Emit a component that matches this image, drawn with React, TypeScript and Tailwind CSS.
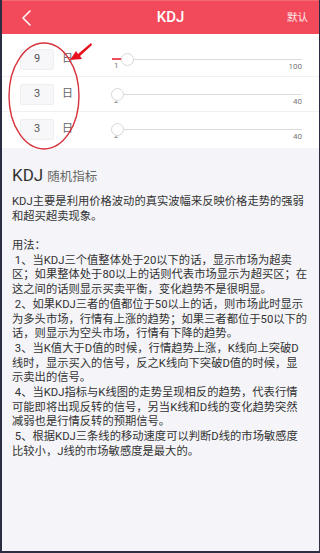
const font = { fontFamily: 'Roboto, "Noto Sans CJK SC", sans-serif' }

const rows = [
  { value: 9, min: 1, max: 100 },
  { value: 3, min: 2, max: 40 },
  { value: 3, min: 2, max: 40 },
]

const lines = [
  'KDJ主要是利用价格波动的真实波幅来反映价格走势的强弱',
  '和超买超卖现象。',
  '',
  '用法：',
  '\u00a01、当KDJ三个值整体处于20以下的话，显示市场为超卖',
  '区；如果整体处于80以上的话则代表市场显示为超买区；在',
  '这之间的话则显示买卖平衡，变化趋势不是很明显。',
  '\u00a02、如果KDJ三者的值都位于50以上的话，则市场此时显示',
  '为多头市场，行情有上涨的趋势；如果三者都位于50以下的',
  '话，则显示为空头市场，行情有下降的趋势。',
  '\u00a03、当K值大于D值的时候，行情趋势上涨，K线向上突破D',
  '线时，显示买入的信号，反之K线向下突破D值的时候，显',
  '示卖出的信号。',
  '\u00a04、当KDJ指标与K线图的走势呈现相反的趋势，代表行情',
  '可能即将出现反转的信号，另当K线和D线的变化趋势突然',
  '减弱也是行情反转的预期信号。',
  '\u00a05、根据KDJ三条线的移动速度可以判断D线的市场敏感度',
  '比较小，J线的市场敏感度是最大的。',
]

export default function App() {
  return (
    <div className="w-[320px] h-[553px] bg-[#2b2d42] overflow-hidden" style={font}>
      <div className="ml-[2px] mr-[1px] h-[551px] flex flex-col bg-[#f5f5f9]">
        {/* Header */}
        <header className="h-[34px] bg-[#f24a5a] border-t border-[#f46875] flex items-center justify-between">
          <svg className="ml-[18px]" width="12" height="18" viewBox="0 0 12 18">
            <path d="M10 2 L3 9 L10 16" fill="none" stroke="white" strokeWidth="1.5" strokeLinecap="round" strokeLinejoin="round" />
          </svg>
          <span className="text-white text-[15px] font-medium ml-[22px]">KDJ</span>
          <span className="text-white/90 text-[10.5px] mr-[11px]">默认</span>
        </header>

        {/* Parameter rows */}
        <div className="relative bg-white pt-[8px] pb-[1px]">
          {rows.map((r, i) => (
            <ParamRow key={i} {...r} last={i === rows.length - 1} />
          ))}

          {/* Annotation ellipse */}
          <svg className="absolute left-[4px] top-[5px]" width="76" height="114" viewBox="0 0 76 114">
            <ellipse cx="38" cy="57" rx="35" ry="53" fill="none" stroke="#d8323c" strokeWidth="1.4" />
          </svg>
          {/* Annotation arrow */}
          <svg className="absolute left-[64px] top-[6px]" width="30" height="26" viewBox="0 0 30 26">
            <path d="M4 20 L10 11 L12 14 L25 3 L26 5 L14 16 L16 19 Z" fill="#e8121f" />
          </svg>
        </div>

        {/* Description */}
        <div className="flex-1 px-[10px] pt-[15px] text-[#333]">
          <div className="flex items-baseline gap-[4px] h-[22px]">
            <span className="text-[17px] text-[#333]">KDJ</span>
            <span className="text-[12.5px] text-[#666]">随机指标</span>
          </div>
          <div className="mt-[10px] text-[11.3px] leading-[14.7px]">
            {lines.map((l, i) => (
              <div key={i} className="whitespace-nowrap h-[14.7px]">
                {l}
              </div>
            ))}
          </div>
        </div>
      </div>
    </div>
  )
}

function ParamRow({ value, min, max, last }: { value: number; min: number; max: number; last: boolean }) {
  const frac = (value - min) / (max - min)
  return (
    <div className={`h-[35px] flex items-center pl-[18px] pr-[17px] ${last ? '' : 'border-b border-[#f0f0f2]'}`}>
      <div className="w-[34px] h-[21px] rounded-[2px] bg-[#f7f7f9] border border-[#efeff1] flex items-center justify-center text-[11px] text-[#555]">
        {value}
      </div>
      <span className="ml-[8px] text-[11px] text-[#666]">日</span>
      <div className="relative flex-1 ml-[39px] h-[35px]">
        <div className="absolute left-0 right-0 top-[17px] h-px bg-[#dcdcdc]" />
        <div
          className="absolute left-0 top-[16px] h-[2px] bg-[#f04b5a]"
          style={{ width: `${frac * 100}%` }}
        />
        <span className="absolute left-[2px] top-[20px] text-[8px] text-[#777] leading-none">{min}</span>
        <span className="absolute right-0 top-[21px] text-[8px] text-[#777] leading-none">{max}</span>
        <div
          className="absolute top-[11px] w-[13px] h-[13px] rounded-full bg-white border border-[#d8d8d8]"
          style={{ left: `calc(${frac * 100}% - 6.5px)` }}
        />
      </div>
    </div>
  )
}
